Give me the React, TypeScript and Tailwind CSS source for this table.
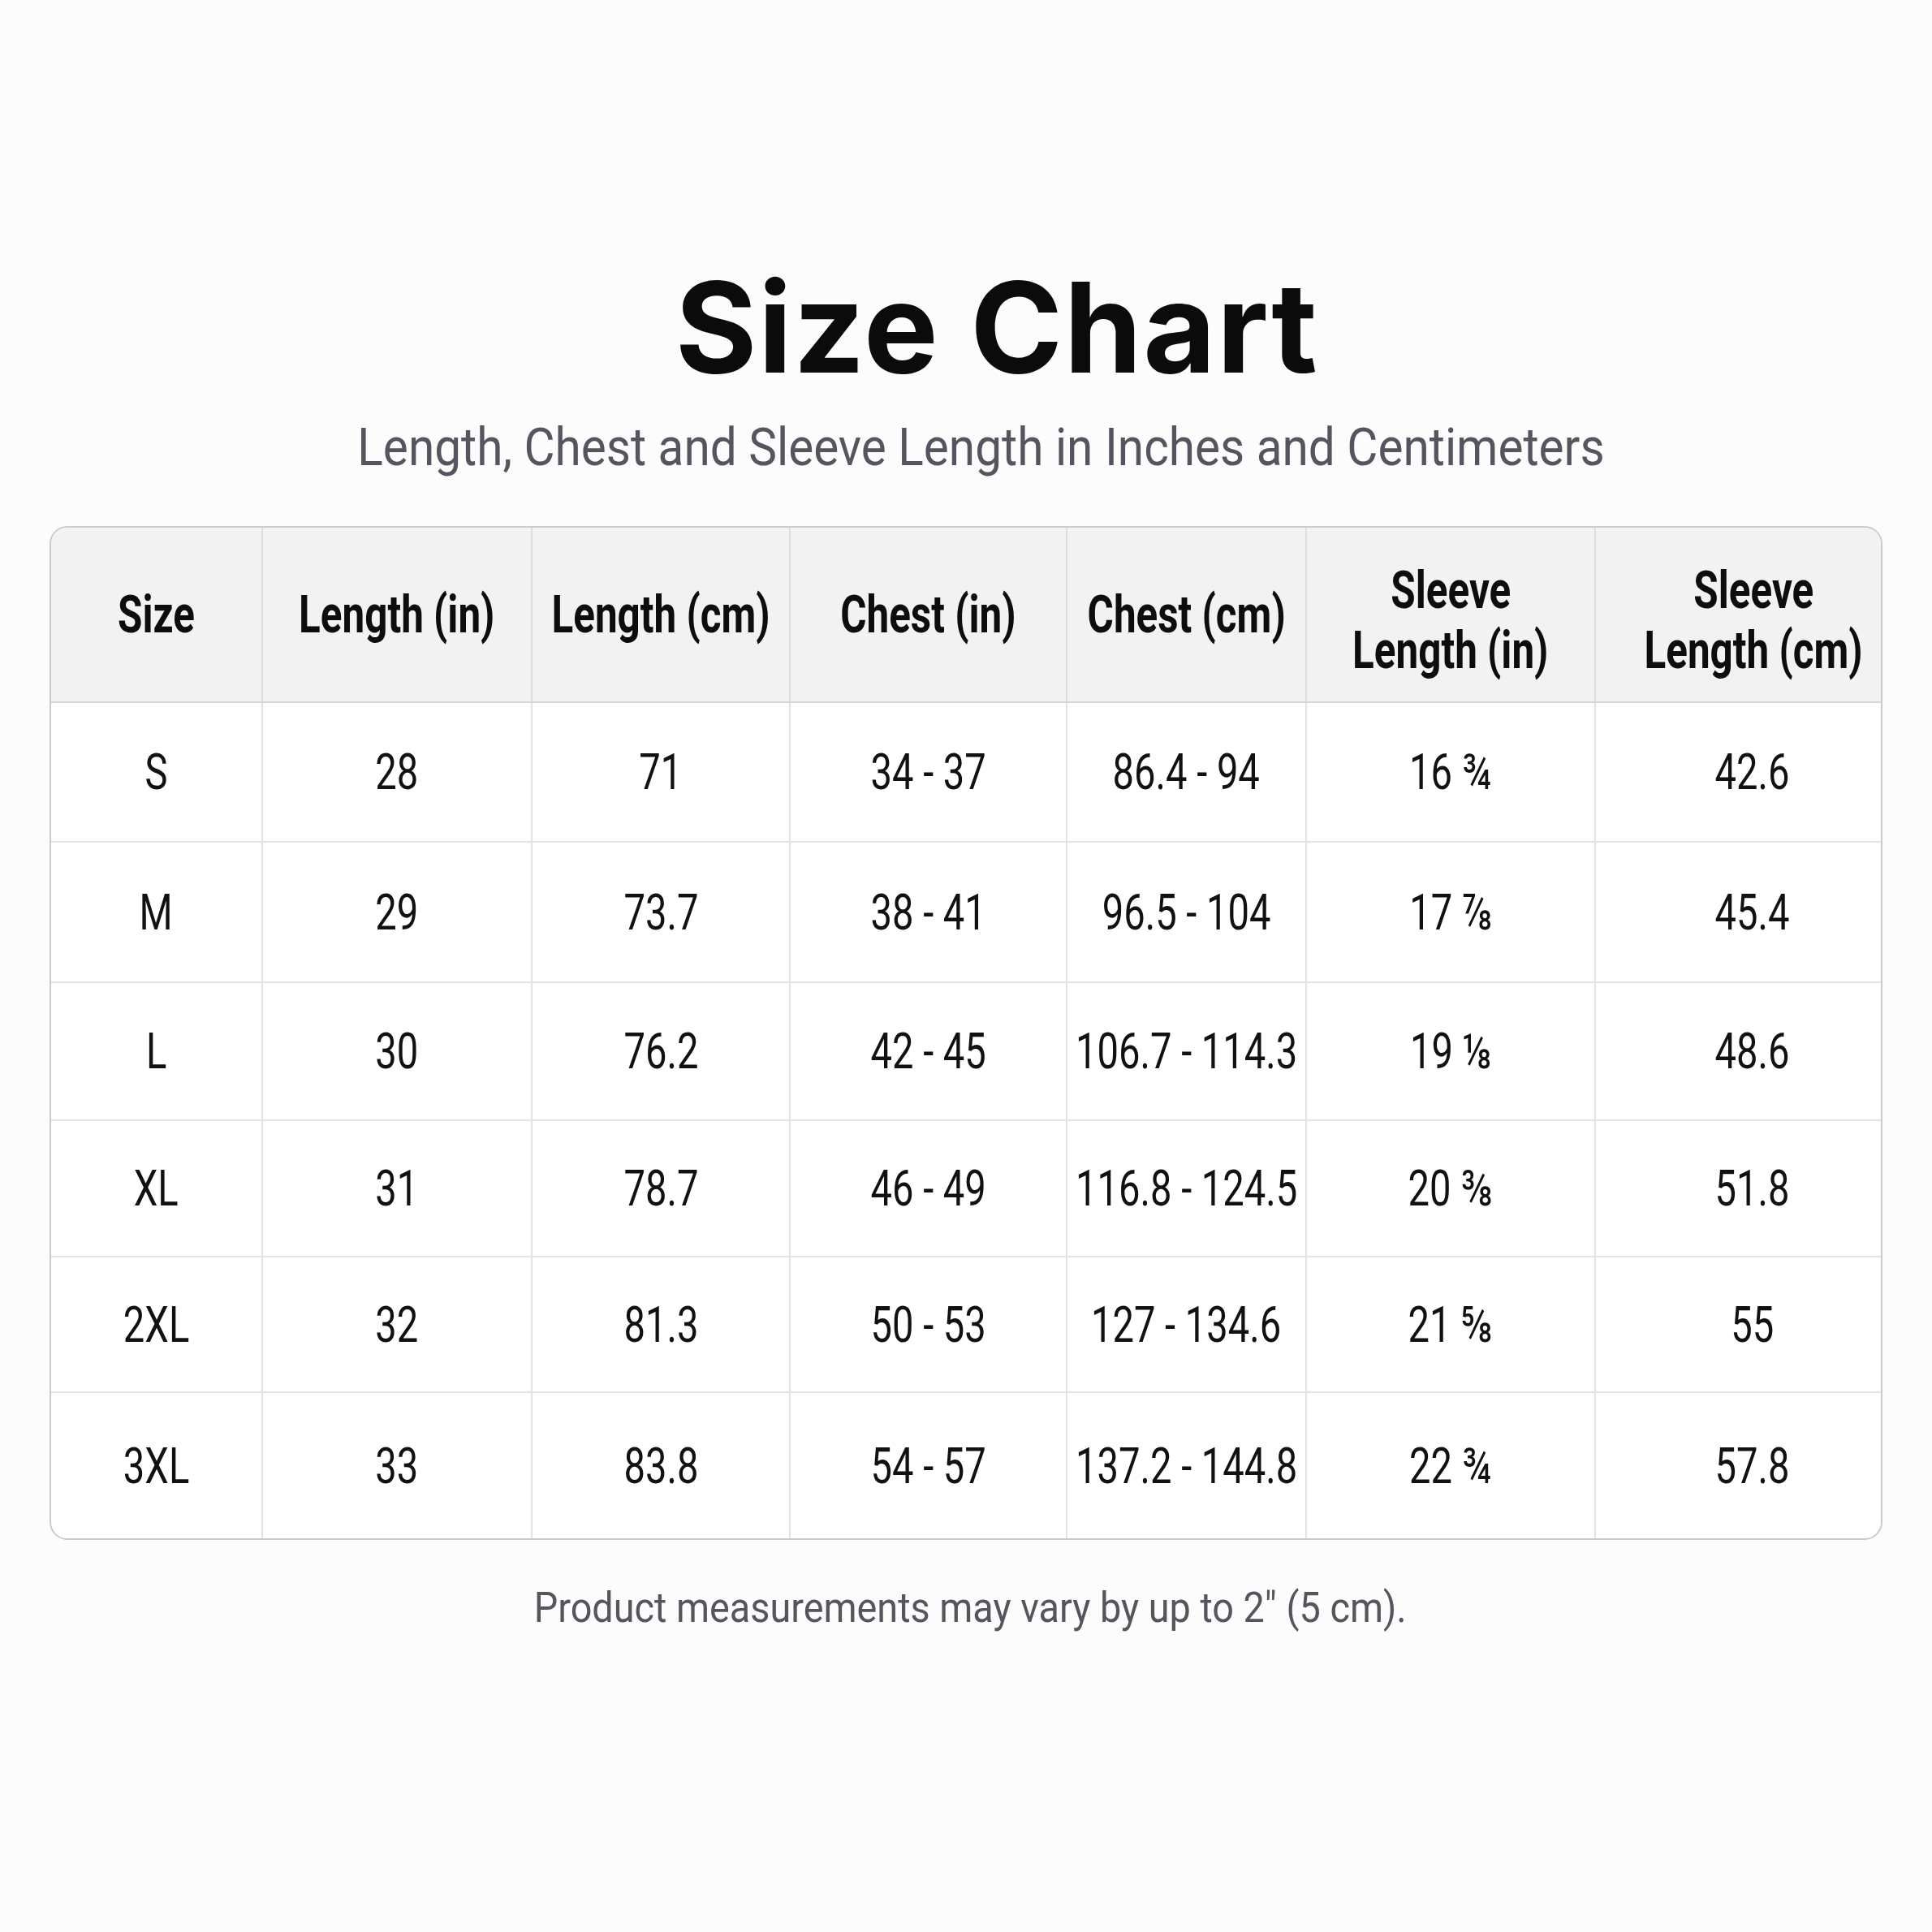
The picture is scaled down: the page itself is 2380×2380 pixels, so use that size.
export default function App() {
  const headers = [
    { lines: ['Size'], pad: '' },
    { lines: ['Length (in)'], pad: '' },
    { lines: ['Length (cm)'], pad: '' },
    { lines: ['Chest (in)'], pad: '' },
    { lines: ['Chest (cm)'], pad: '' },
    { lines: ['Sleeve', 'Length (in)'], pad: 'pt-[14px]' },
    { lines: ['Sleeve', 'Length (cm)'], pad: 'pt-[14px] pl-[38px]' },
  ]

  // size, length in, length cm, chest in, chest cm, sleeve in, sleeve cm
  const rows = [
    { h: 'h-[172px]', cells: ['S', '28', '71', '34 - 37', '86.4 - 94', '16 ¾', '42.6'] },
    { h: 'h-[173px]', cells: ['M', '29', '73.7', '38 - 41', '96.5 - 104', '17 ⅞', '45.4'] },
    { h: 'h-[170px]', cells: ['L', '30', '76.2', '42 - 45', '106.7 - 114.3', '19 ⅛', '48.6'] },
    { h: 'h-[168px]', cells: ['XL', '31', '78.7', '46 - 49', '116.8 - 124.5', '20 ⅜', '51.8'] },
    { h: 'h-[167px]', cells: ['2XL', '32', '81.3', '50 - 53', '127 - 134.6', '21 ⅝', '55'] },
    { h: 'h-[179px]', cells: ['3XL', '33', '83.8', '54 - 57', '137.2 - 144.8', '22 ¾', '57.8'] },
  ]

  const grid = 'grid grid-cols-[261px_332px_318px_341px_295px_356px_351px]'

  return (
    <div className="min-h-[2380px] w-[2380px] bg-[#fcfcfc] flex flex-col items-center pt-[326px] font-['Roboto','Liberation_Sans',sans-serif]">
      <h1 className="ml-[76px] text-[154px] leading-none font-bold text-[#0b0b0b] tracking-[0.01em] font-['Inter','Roboto',sans-serif]">
        Size Chart
      </h1>
      <p className="mt-[39px] ml-[36px] text-[65px] leading-none text-[#55555f]">
        <span className="inline-block scale-x-[0.9]">Length, Chest and Sleeve Length in Inches and Centimeters</span>
      </p>

      <div className="mt-[64px] w-[2258px] border-2 border-[#cbcbcb] rounded-[22px] overflow-hidden bg-white">
        <div className={`${grid} h-[216px] bg-[#f2f2f2] border-b-2 border-[#d6d6d6]`}>
          {headers.map((h, i) => (
            <div
              key={i}
              className={`flex flex-col items-center justify-center ${h.pad} ${i < 6 ? 'border-r-2 border-[#dedede]' : ''}`}
            >
              {h.lines.map((l) => (
                <span
                  key={l}
                  className="inline-block scale-x-[0.76] text-[65px] leading-[74px] font-bold text-[#0d0d0d] whitespace-nowrap"
                >
                  {l}
                </span>
              ))}
            </div>
          ))}
        </div>

        {rows.map((r, ri) => (
          <div key={ri} className={`${grid} ${r.h} ${ri < rows.length - 1 ? 'border-b-2 border-[#e3e3e3]' : ''}`}>
            {r.cells.map((c, ci) => (
              <div
                key={ci}
                className={`flex items-center justify-center ${ci === 6 ? 'pl-[34px]' : ''} ${ci < 6 ? 'border-r-2 border-[#e3e3e3]' : ''}`}
              >
                <span className="inline-block scale-x-[0.76] text-[62px] leading-none text-[#111111] whitespace-nowrap">
                  {c}
                </span>
              </div>
            ))}
          </div>
        ))}
      </div>

      <p className="mt-[58px] ml-[10px] text-[52px] leading-none text-[#55555e]">
        <span className="inline-block scale-x-[0.9]">Product measurements may vary by up to 2" (5 cm).</span>
      </p>
    </div>
  )
}
